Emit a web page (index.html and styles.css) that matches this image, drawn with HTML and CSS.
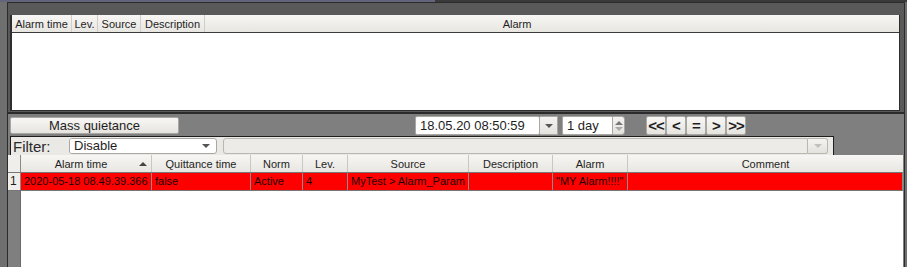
FILE: index.html
```html
<!DOCTYPE html>
<html lang="en">
<head>
  <meta charset="UTF-8">
  <title>Alarm viewer</title>
  <link rel="stylesheet" href="styles.css">
</head>
<body>
  <div class="topstrip"></div>
  <div class="window">
    <div class="top-panel">
      <div class="alarm-list">
        <div class="list-head">
          <div class="hcell w-time">Alarm time</div>
          <div class="hcell w-lev">Lev.</div>
          <div class="hcell w-src">Source</div>
          <div class="hcell w-desc">Description</div>
          <div class="hcell w-alarm">Alarm</div>
          <div class="hcell filler"></div>
        </div>
      </div>
    </div>

    <div class="bottom">
      <div class="toolbar">
        <button class="btn mass">Mass quietance</button>
        <div class="combo date">
          <span class="field">18.05.20 08:50:59</span>
          <span class="drop"><span class="tri"></span></span>
        </div>
        <div class="spin">
          <span class="field">1 day</span>
          <span class="arrows"><span class="up"></span><span class="down"></span></span>
        </div>
        <div class="nav">
          <button class="btn navbtn">&lt;&lt;</button>
          <button class="btn navbtn">&lt;</button>
          <button class="btn navbtn">=</button>
          <button class="btn navbtn">&gt;</button>
          <button class="btn navbtn">&gt;&gt;</button>
        </div>
      </div>

      <div class="filter">
        <span class="filter-label">Filter:</span>
        <div class="combo select">
          <span class="field">Disable</span>
          <span class="tri"></span>
        </div>
        <div class="combo disabled">
          <span class="field"></span>
          <span class="drop"><span class="tri"></span></span>
        </div>
      </div>

      <div class="grid">
        <div class="grid-head">
          <div class="corner"></div>
          <div class="gh c-time sorted">Alarm time <span class="sort"></span></div>
          <div class="gh c-quit">Quittance time</div>
          <div class="gh c-norm">Norm</div>
          <div class="gh c-lev">Lev.</div>
          <div class="gh c-src">Source</div>
          <div class="gh c-desc">Description</div>
          <div class="gh c-alarm">Alarm</div>
          <div class="gh c-comm">Comment</div>
        </div>
        <div class="grid-row active">
          <div class="rownum">1</div>
          <div class="gc c-time">2020-05-18 08.49.39.366</div>
          <div class="gc c-quit">false</div>
          <div class="gc c-norm">Active</div>
          <div class="gc c-lev">4</div>
          <div class="gc c-src">MyTest &gt; Alarm_Param</div>
          <div class="gc c-desc"></div>
          <div class="gc c-alarm">"MY Alarm!!!!"</div>
          <div class="gc c-comm"></div>
        </div>
        <div class="grid-empty">
          <div class="rowgutter"></div>
          <div class="blank"></div>
        </div>
      </div>
    </div>
  </div>
</body>
</html>
```

FILE: styles.css
```css
* {
  margin: 0;
  padding: 0;
  box-sizing: border-box;
}
body {
  width: 907px;
  height: 267px;
  overflow: hidden;
  background: #6f6f6f;
  font-family: "Liberation Sans", Arial, sans-serif;
  color: #1e1e1e;
}
.topstrip {
  height: 2px;
  background: linear-gradient(to right, #63647c 0, #63647c 435px, #3a3a3a 435px);
}
.window {
  margin: 0 2px 0 7px;
  border-left: 1px solid #2b2b2b;
  border-right: 1px solid #2b2b2b;
  height: 265px;
  display: flex;
  flex-direction: column;
}

/* upper alarm list */
.top-panel {
  height: 112px;
  background: #595959;
  border-top: 1px solid #2b2b2b;
  border-bottom: 2px solid #2b2b2b;
  padding: 12px 4px 0 2px;
}
.alarm-list {
  height: 96px;
  background: #fff;
  border: 1px solid #2e2e2e;
  border-top: none;
  border-left-width: 2px;
}
.list-head {
  display: flex;
  height: 18px;
  border-bottom: 1px solid #3a3a3a;
  background: linear-gradient(#f7f6f4, #e8e6e1);
}
.hcell {
  font-size: 11px;
  line-height: 18px;
  text-align: center;
  border-right: 1px solid #d0cec8;
  white-space: nowrap;
}
.w-time { width: 60px; }
.w-lev { width: 26px; }
.w-src { width: 43px; }
.w-desc { width: 64px; }
.w-alarm { width: 624px; border-right: none; }
.filler { flex: 1; border-right: none; }

/* lower section */
.bottom {
  flex: 1;
  background: #7f7f7f;
  display: flex;
  flex-direction: column;
}
.toolbar {
  display: flex;
  align-items: center;
  height: 22px;
  padding: 1px 0 0 2px;
}
.btn {
  font-family: "Liberation Sans", Arial, sans-serif;
  background: linear-gradient(#f8f7f5, #e6e4df);
  border: 1px solid #a9a7a2;
  border-radius: 2px;
  color: #1e1e1e;
}
.mass {
  width: 169px;
  height: 17px;
  font-size: 13px;
  line-height: 15px;
}
.combo, .spin {
  display: flex;
  height: 19px;
}
.field {
  background: #fff;
  font-size: 13px;
  line-height: 17px;
  padding-left: 4px;
  border: 1px solid #a9a7a2;
  border-radius: 2px;
}
.date {
  margin-left: 236px;
}
.date .field {
  width: 125px;
}
.drop {
  width: 18px;
  background: linear-gradient(#f4f3f1, #e4e2dd);
  border: 1px solid #a9a7a2;
  border-left: none;
  display: flex;
  align-items: center;
  justify-content: center;
}
.tri {
  width: 0;
  height: 0;
  border-left: 4px solid transparent;
  border-right: 4px solid transparent;
  border-top: 4px solid #555;
}
.spin {
  margin-left: 4px;
}
.spin .field {
  width: 50px;
  border-right: none;
  border-radius: 2px 0 0 2px;
}
.arrows {
  width: 13px;
  background: linear-gradient(#f4f3f1, #e4e2dd);
  border: 1px solid #a9a7a2;
  border-radius: 0 3px 3px 0;
  display: flex;
  flex-direction: column;
  align-items: center;
  justify-content: center;
  gap: 2px;
}
.up {
  border-left: 4px solid transparent;
  border-right: 4px solid transparent;
  border-bottom: 4px solid #777;
}
.down {
  border-left: 4px solid transparent;
  border-right: 4px solid transparent;
  border-top: 4px solid #aaa;
}
.nav {
  display: flex;
  margin-left: 21px;
  height: 19px;
}
.navbtn {
  width: 20px;
  height: 19px;
  font-size: 15px;
  font-weight: bold;
  line-height: 16px;
  letter-spacing: -1px;
  padding: 0;
}

/* filter bar */
.filter {
  display: flex;
  align-items: center;
  width: 824px;
  height: 19px;
  margin-left: 2px;
  background: #ebe9e5;
  border: 1px solid #1e1e1e;
  border-bottom: none;
}
.filter-label {
  font-size: 15px;
  line-height: 17px;
  padding-left: 2px;
  width: 58px;
  color: #2a2a2a;
}
.select {
  width: 148px;
  height: 16px;
  background: #fff;
  border: 1px solid #a9a7a2;
  border-radius: 3px;
  align-items: center;
}
.select .field {
  border: none;
  flex: 1;
  line-height: 14px;
}
.select .tri {
  margin-right: 6px;
}
.disabled {
  flex: 1;
  height: 16px;
  margin: 0 5px 0 6px;
}
.disabled .field {
  flex: 1;
  background: #edebe7;
  border-color: #b9b7b2;
  border-radius: 3px 0 0 3px;
}
.disabled .drop {
  width: 20px;
  border-radius: 0 3px 3px 0;
  border-color: #b9b7b2;
}
.disabled .tri {
  border-top-color: #c2c0bb;
}

/* alarm grid */
.grid {
  flex: 1;
  background: #fff;
  display: flex;
  flex-direction: column;
  margin-right: 1px;
}
.grid-head, .grid-row {
  display: flex;
  height: 17px;
}
.grid-head {
  background: linear-gradient(#f7f6f4, #e8e6e1);
  border-bottom: 1px solid #777;
  height: 18px;
}
.corner, .rownum {
  width: 13px;
  background: #efeeea;
  border-right: 1px solid #8a8a8a;
}
.gh {
  font-size: 11px;
  line-height: 18px;
  text-align: center;
  border-right: 1px solid #c9c7c2;
  position: relative;
  white-space: nowrap;
}
.sorted {
  padding-right: 10px;
}
.sort {
  position: absolute;
  right: 4px;
  top: 7px;
  border-left: 4px solid transparent;
  border-right: 4px solid transparent;
  border-bottom: 4px solid #444;
}
.c-time { width: 131px; }
.c-quit { width: 99px; }
.c-norm { width: 52px; }
.c-lev { width: 45px; }
.c-src { width: 121px; }
.c-desc { width: 84px; }
.c-alarm { width: 75px; }
.c-comm { flex: 1; border-right: none; }
.grid-row {
  height: 18px;
  border-bottom: 1px solid #777;
}
.rownum {
  font-size: 12px;
  line-height: 17px;
  padding-left: 2px;
}
.gc {
  font-size: 11px;
  line-height: 17px;
  padding-left: 3px;
  border-right: 1px solid #8c8c8c;
  white-space: nowrap;
  overflow: hidden;
}
.active .gc {
  background: #ff0000;
  color: #1a0000;
}
.grid-empty {
  flex: 1;
  display: flex;
}
.rowgutter {
  width: 13px;
  background: #7f7f7f;
  border-right: 1px solid #6a6a6a;
}
.blank {
  flex: 1;
  background: #fff;
}
```
